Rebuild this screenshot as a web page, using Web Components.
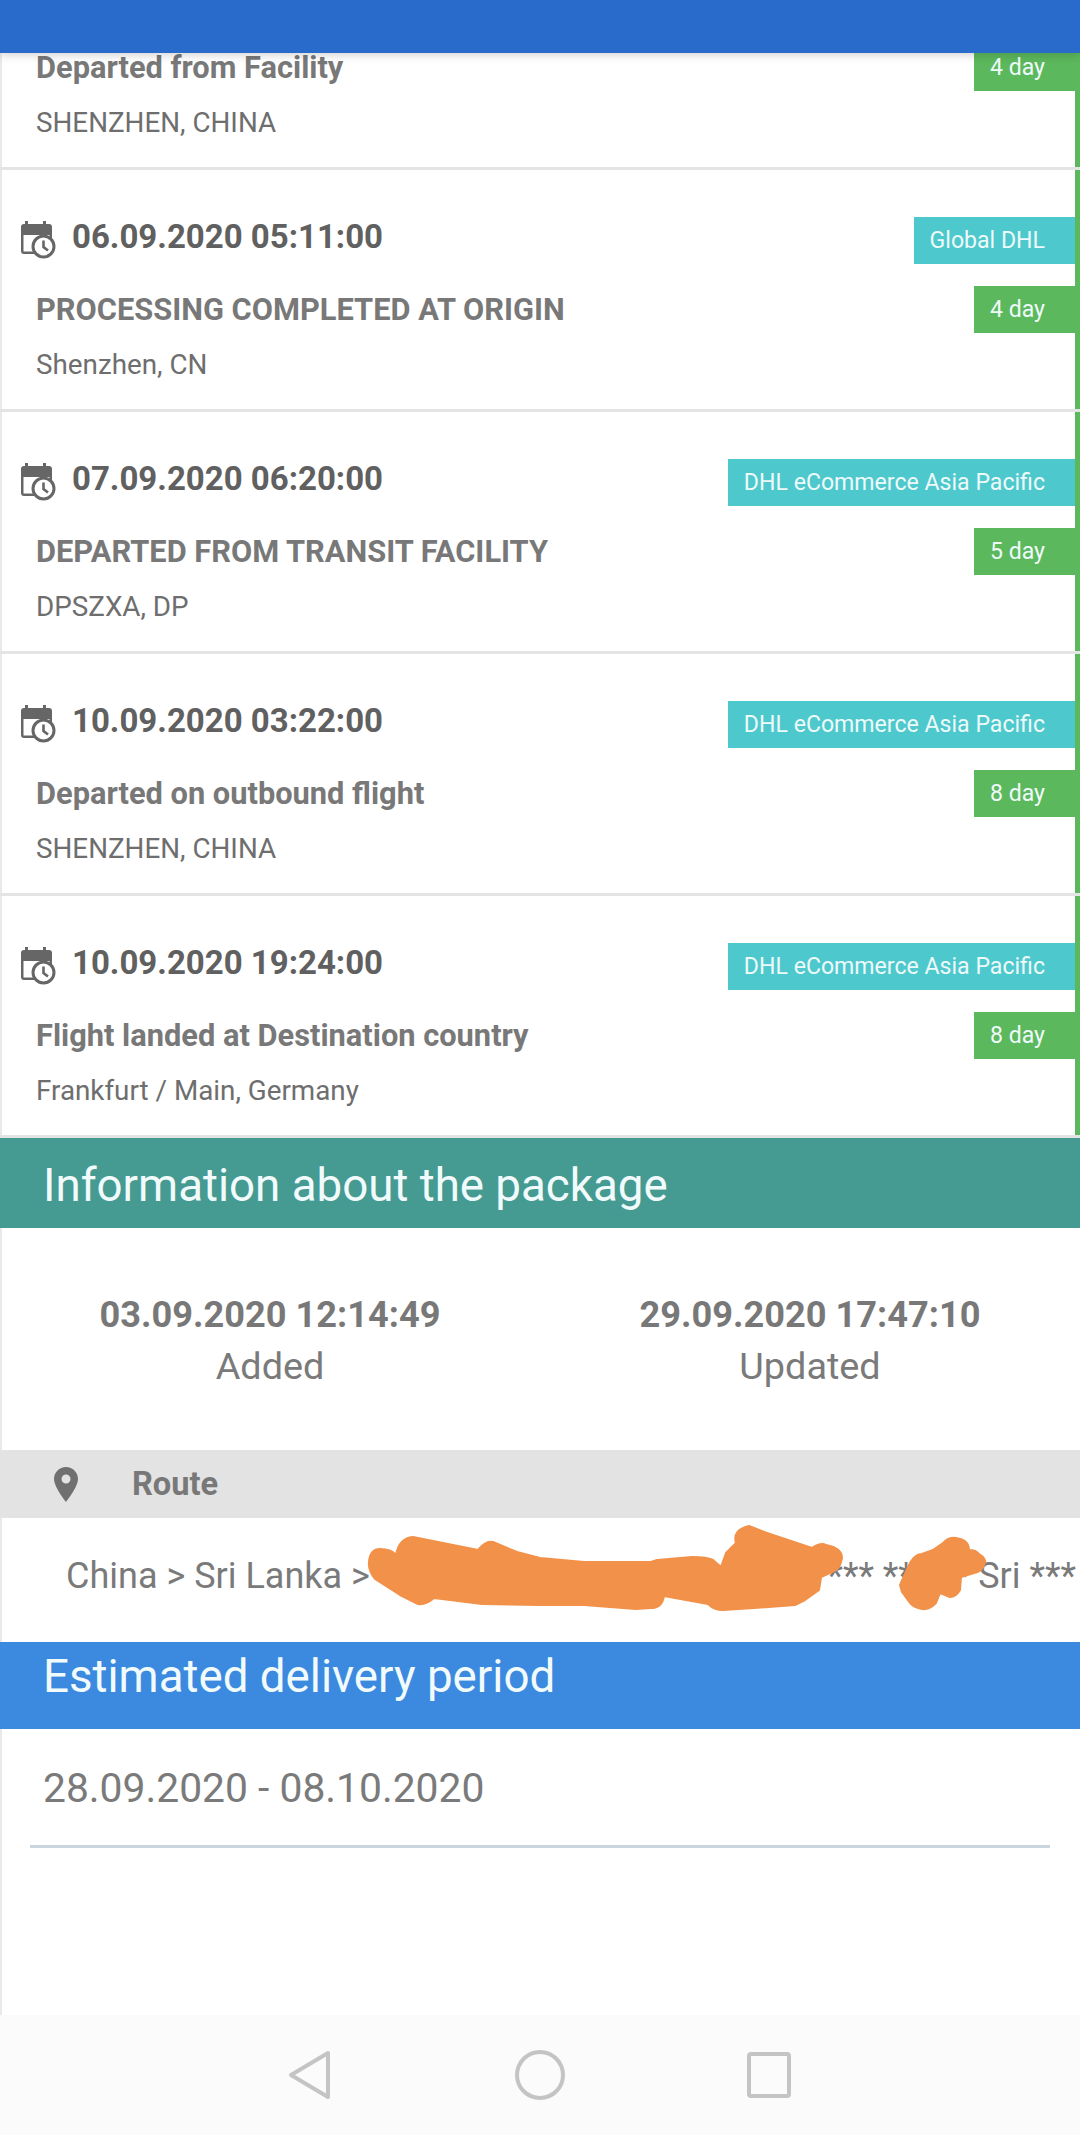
<!DOCTYPE html>
<html>
<head>
<meta charset="utf-8">
<title>Package tracking</title>
<style>
  html, body { margin: 0; padding: 0; }
  body {
    width: 1080px;
    height: 2135px;
    display: flex;
    flex-direction: column;
    overflow: hidden;
    font-family: Roboto, "Liberation Sans", sans-serif;
    color: #787878;
    background: linear-gradient(#e9e9e9, #e9e9e9) 0 0 / 2px 100% no-repeat, #fff;
  }
</style>
</head>
<body>
  <app-bar></app-bar>

  <track-row cut days="4 day">
    Departed from Facility
    <span slot="place">SHENZHEN, CHINA</span>
  </track-row>
  <track-row date="06.09.2020 05:11:00" carrier="Global DHL" days="4 day">
    PROCESSING COMPLETED AT ORIGIN
    <span slot="place">Shenzhen, CN</span>
  </track-row>
  <track-row date="07.09.2020 06:20:00" carrier="DHL eCommerce Asia Pacific" days="5 day">
    DEPARTED FROM TRANSIT FACILITY
    <span slot="place">DPSZXA, DP</span>
  </track-row>
  <track-row date="10.09.2020 03:22:00" carrier="DHL eCommerce Asia Pacific" days="8 day">
    Departed on outbound flight
    <span slot="place">SHENZHEN, CHINA</span>
  </track-row>
  <track-row date="10.09.2020 19:24:00" carrier="DHL eCommerce Asia Pacific" days="8 day">
    Flight landed at Destination country
    <span slot="place">Frankfurt / Main, Germany</span>
  </track-row>

  <section-head color="#459a92" tall>Information about the package</section-head>
  <info-dates>
    <info-cell date="03.09.2020 12:14:49">Added</info-cell>
    <info-cell date="29.09.2020 17:47:10">Updated</info-cell>
  </info-dates>
  <route-block></route-block>
  <section-head color="#3b8ae0">Estimated delivery period</section-head>
  <delivery-range>28.09.2020 - 08.10.2020</delivery-range>
  <nav-keys></nav-keys>

<script>
class AppBar extends HTMLElement {
  connectedCallback() {
    this.attachShadow({ mode: 'open' });
    this.shadowRoot.innerHTML = `
      <style>
        :host {
          display: block;
          flex: none;
          height: 53px;
          background: #296bca;
          box-shadow: 0 2px 9px rgba(0,0,0,0.18);
          position: relative;
          z-index: 2;
        }
      </style>
    `;
  }
}
customElements.define('app-bar', AppBar);

class TrackRow extends HTMLElement {
  connectedCallback() {
    const date = this.getAttribute('date');
    const carrier = this.getAttribute('carrier');
    const head = date ? `
      <div class="date">
        <svg width="36" height="40" viewBox="0 0 36 40">
          <path fill="#666" d="M5 2h3v3h15V2h3v3h3a3 3 0 0 1 3 3v24a3 3 0 0 1-3 3H4a3 3 0 0 1-3-3V8a3 3 0 0 1 3-3h1z"/>
          <rect x="3.5" y="16" width="26" height="16.5" fill="#fff"/>
          <circle cx="23.5" cy="27.5" r="10.5" fill="#fff" stroke="#666" stroke-width="3"/>
          <path d="M23.5 21.5v6.5l4.5 3.5" fill="none" stroke="#666" stroke-width="2.6"/>
        </svg>
        <b>${date}</b>
      </div>` : '';
    this.attachShadow({ mode: 'open' });
    this.shadowRoot.innerHTML = `
      <style>
        :host {
          display: block;
          flex: none;
          border-bottom: 3px solid #e4e4e4;
        }
        .row {
          display: flex;
          justify-content: space-between;
          height: 239px;
          box-sizing: border-box;
          padding-top: 47px;
          border-right: 5px solid #5cb85c;
          overflow: hidden;
        }
        :host([cut]) .row { height: 114px; padding-top: 0; }
        :host([cut]) .title { margin-top: -3px; }
        :host([cut]) .badges { margin-top: -9px; }
        .date {
          display: flex;
          align-items: center;
          gap: 16px;
          height: 38px;
          padding-left: 20px;
          font-size: 33px;
          color: #606060;
          margin-bottom: 37px;
        }
        .date svg { flex: none; margin-top: 6px; }
        .title, .place {
          padding-left: 36px;
          line-height: 36px;
        }
        .title { font-size: 30.8px; font-weight: 700; }
        .place { font-size: 27.8px; color: #6e6e6e; margin-top: 19px; }
        .badges {
          display: flex;
          flex-direction: column;
          align-items: flex-end;
          gap: 22px;
        }
        .badge {
          height: 47px;
          line-height: 47px;
          padding: 0 30px 0 16px;
          font-size: 23.1px;
          color: #eefafa;
          white-space: nowrap;
        }
        .carrier { background: #4dc8cc; }
        .days { background: #5cb85c; }
      </style>
      <div class="row">
        <div>
          ${head}
          <div class="title"><slot></slot></div>
          <div class="place"><slot name="place"></slot></div>
        </div>
        <div class="badges">
          ${carrier ? `<div class="badge carrier">${carrier}</div>` : ''}
          <div class="badge days">${this.getAttribute('days')}</div>
        </div>
      </div>
    `;
  }
}
customElements.define('track-row', TrackRow);

class SectionHead extends HTMLElement {
  connectedCallback() {
    this.attachShadow({ mode: 'open' });
    this.shadowRoot.innerHTML = `
      <style>
        :host {
          display: block;
          flex: none;
          height: 87px;
          box-sizing: border-box;
          padding: 0 43px;
          line-height: 69px;
          font-size: 45.7px;
          color: #f2fbfb;
          background: ${this.getAttribute('color')};
        }
        :host([tall]) { height: 90px; line-height: 95px; }
      </style>
      <slot></slot>
    `;
  }
}
customElements.define('section-head', SectionHead);

class InfoDates extends HTMLElement {
  connectedCallback() {
    this.attachShadow({ mode: 'open' });
    this.shadowRoot.innerHTML = `
      <style>
        :host {
          display: grid;
          grid-template-columns: 1fr 1fr;
          flex: none;
          height: 222px;
          box-sizing: border-box;
          padding-top: 64px;
        }
      </style>
      <slot></slot>
    `;
  }
}
customElements.define('info-dates', InfoDates);

class InfoCell extends HTMLElement {
  connectedCallback() {
    this.attachShadow({ mode: 'open' });
    this.shadowRoot.innerHTML = `
      <style>
        :host { display: block; text-align: center; }
        b { display: block; font-size: 36.2px; line-height: 46px; }
        span { display: block; font-size: 37.8px; line-height: 50px; color: #7a7a7a; margin-top: 3px; }
      </style>
      <b>${this.getAttribute('date')}</b>
      <span><slot></slot></span>
    `;
  }
}
customElements.define('info-cell', InfoCell);

class RouteBlock extends HTMLElement {
  connectedCallback() {
    this.attachShadow({ mode: 'open' });
    this.shadowRoot.innerHTML = `
      <style>
        :host { display: block; flex: none; position: relative; }
        .head {
          display: flex;
          align-items: center;
          gap: 54px;
          height: 68px;
          padding-left: 54px;
          background: #e3e3e3;
          font-size: 32.6px;
          font-weight: 700;
          line-height: 70px;
        }
        .head svg { flex: none; margin-top: 1px; }
        .value {
          display: flex;
          justify-content: space-between;
          height: 124px;
          box-sizing: border-box;
          padding: 34px 4px 0 66px;
          line-height: 48px;
          font-size: 36px;
          color: #7a7a7a;
          white-space: nowrap;
        }
        .smear { position: absolute; left: 0; top: -1450px; pointer-events: none; }
      </style>
      <div class="head">
        <svg width="24" height="35" viewBox="0 0 24 35">
          <path fill="#707070" fill-rule="evenodd" d="M12 0C5.4 0 0 5.4 0 12c0 8 12 23 12 23s12-15 12-23C24 5.400 18.600 0 12 0zm0 7.500a4.500 4.500 0 1 1 0 9 4.500 4.500 0 0 1 0-9z"/>
        </svg>
        Route
      </div>
      <div class="value"><span>China &gt; Sri Lanka &gt;</span><span>*** ** *** Sri ***</span></div>
      <svg class="smear" width="1080" height="1700" viewBox="0 0 1080 1700">
        <path fill="#f29149" stroke="#f29149" stroke-width="2" stroke-linejoin="round" d="M369 1562Q370 1549 380 1549Q391 1549 396 1555Q399 1538 413 1537L478 1550Q486 1540 493 1542L517 1552L540 1558L584 1562L651 1562L657 1560L692 1557Q707 1557 713 1560L721 1567L726 1553L736 1543Q732 1530 749 1526L767 1533L812 1548Q821 1542 826 1545Q842 1548 842 1558Q840 1570 832 1572L821 1577L819 1590L805 1600L795 1605L754 1608L723 1610Q714 1610 708 1604L664 1596Q662 1608 651 1608L636 1609L584 1605L540 1605L482 1604L434 1598Q426 1605 418 1604L400 1595L375 1579Q368 1570 369 1562Z"/>
        <path fill="#f29149" stroke="#f29149" stroke-width="2" stroke-linejoin="round" d="M900 1585L910 1563Q915 1554 922 1554L933 1550L943 1543Q949 1537 956 1538Q969 1540 969 1550Q976 1550 979 1554Q986 1558 985 1563Q982 1572 974 1573L961 1577L960 1590Q956 1597 950 1597L940 1593L936 1603Q929 1610 922 1609Q914 1608 910 1603L902 1592Z"/>
      </svg>
    `;
  }
}
customElements.define('route-block', RouteBlock);

class DeliveryRange extends HTMLElement {
  connectedCallback() {
    this.attachShadow({ mode: 'open' });
    this.shadowRoot.innerHTML = `
      <style>
        :host { display: block; flex: none; padding: 0 30px; }
        div {
          height: 119px;
          box-sizing: border-box;
          padding: 34px 0 0 13px;
          line-height: 50px;
          font-size: 40.8px;
          color: #7a7a7a;
          border-bottom: 3px solid #c9d6e0;
        }
      </style>
      <div><slot></slot></div>
    `;
  }
}
customElements.define('delivery-range', DeliveryRange);

class NavKeys extends HTMLElement {
  connectedCallback() {
    this.attachShadow({ mode: 'open' });
    this.shadowRoot.innerHTML = `
      <style>
        :host {
          display: flex;
          align-items: center;
          margin-top: auto;
          flex: none;
          height: 120px;
          padding-left: 288px;
          gap: 185px;
          background: #fbfbfb;
        }
        svg { flex: none; fill: none; stroke: #c4c4c4; stroke-width: 4; stroke-linejoin: round; }
      </style>
      <svg width="42" height="50" viewBox="0 0 42 50"><path d="M40 3L3 25L40 47Z"/></svg>
      <svg width="50" height="50" viewBox="0 0 50 50"><circle cx="25" cy="25" r="23"/></svg>
      <svg width="44" height="46" viewBox="0 0 44 46" style="margin-left:-3px"><rect x="2" y="2" width="40" height="42" rx="2"/></svg>
    `;
  }
}
customElements.define('nav-keys', NavKeys);
</script>
</body>
</html>
